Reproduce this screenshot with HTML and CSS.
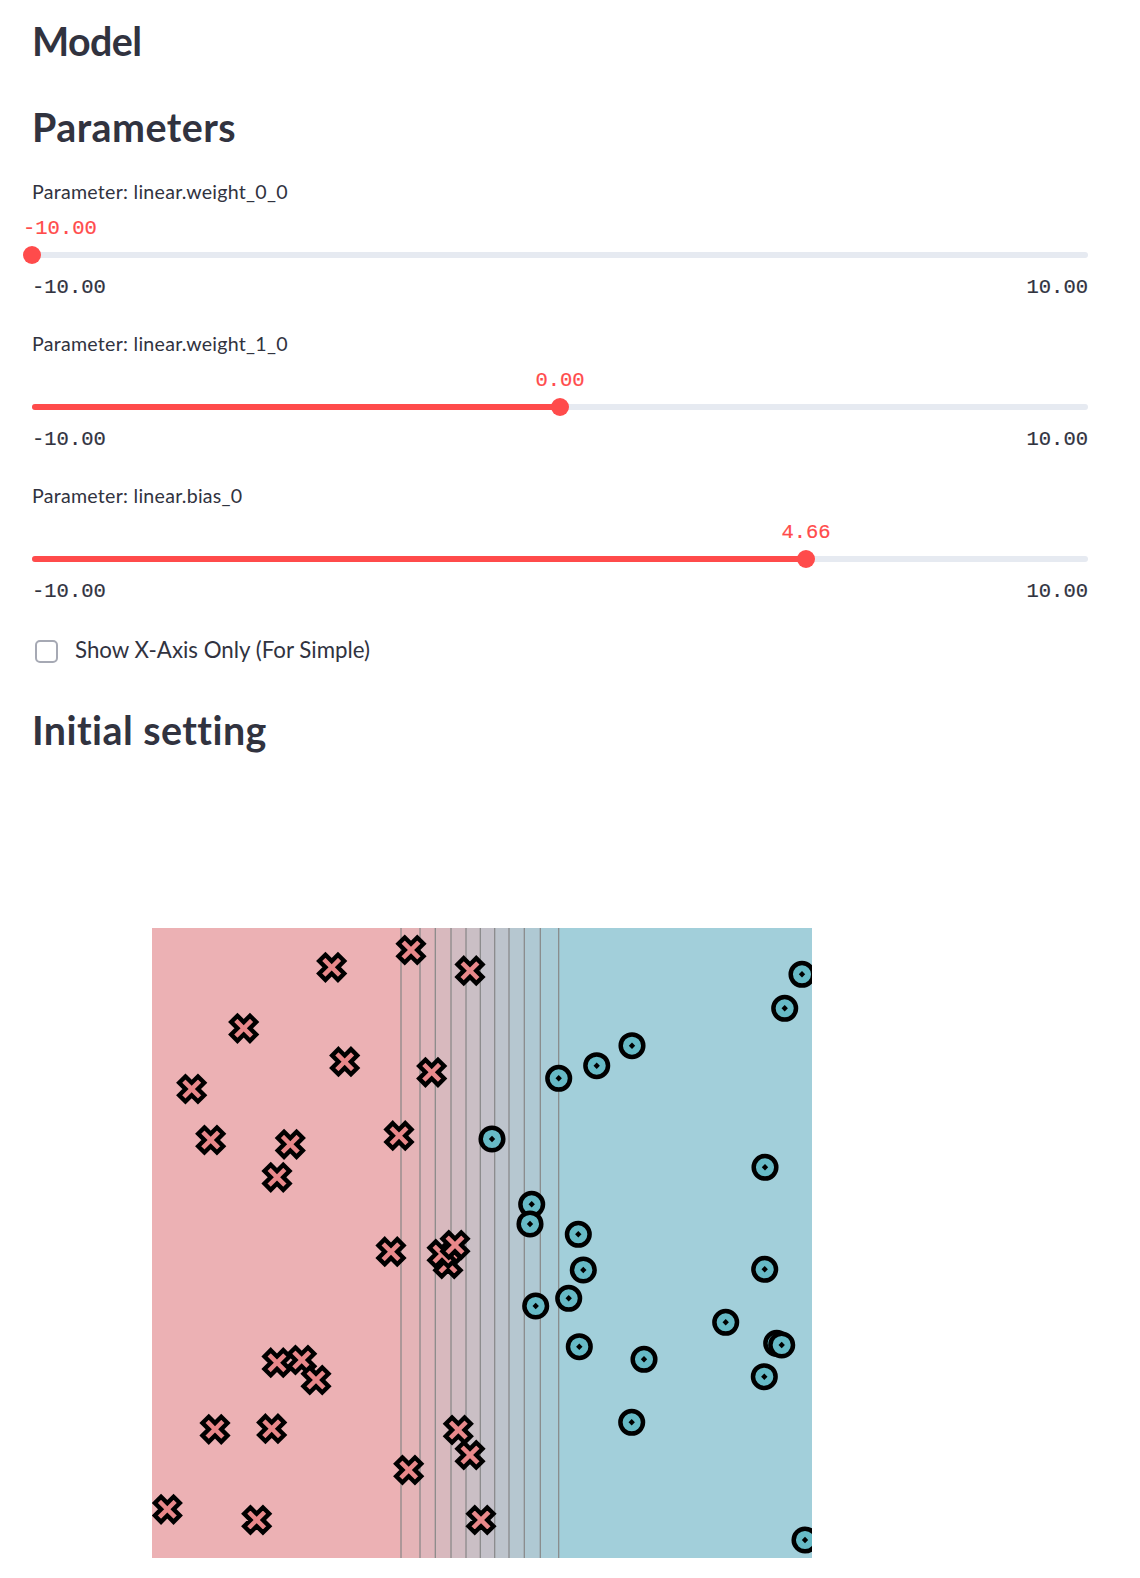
FILE: index.html
```html
<!DOCTYPE html>
<html lang="en">
<head>
<meta charset="utf-8">
<title>Model</title>
<link rel="stylesheet" href="styles.css">
</head>
<body>
<main class="page">
  <h3 class="heading h-model">Model</h3>
  <h3 class="heading h-params">Parameters</h3>

  <div class="slider">
    <div class="slider-label">Parameter: linear.weight_0_0</div>
    <div class="rail">
      <div class="value at-start" style="left:0%">-10.00</div>
      <div class="track"><div class="fill" style="width:0%"></div></div>
      <div class="thumb" style="left:0%"></div>
    </div>
    <div class="ticks"><span>-10.00</span><span>10.00</span></div>
  </div>

  <div class="slider">
    <div class="slider-label">Parameter: linear.weight_1_0</div>
    <div class="rail">
      <div class="value" style="left:50%">0.00</div>
      <div class="track"><div class="fill" style="width:50%"></div></div>
      <div class="thumb" style="left:50%"></div>
    </div>
    <div class="ticks"><span>-10.00</span><span>10.00</span></div>
  </div>

  <div class="slider">
    <div class="slider-label">Parameter: linear.bias_0</div>
    <div class="rail">
      <div class="value" style="left:73.3%">4.66</div>
      <div class="track"><div class="fill" style="width:73.3%"></div></div>
      <div class="thumb" style="left:73.3%"></div>
    </div>
    <div class="ticks"><span>-10.00</span><span>10.00</span></div>
  </div>

  <label class="check">
    <span class="box"></span>
    <span class="check-label">Show X-Axis Only (For Simple)</span>
  </label>

  <h3 class="heading h-initial">Initial setting</h3>

  <div class="figure">
    <svg class="plot" width="660" height="630" viewBox="0 0 660 630" xmlns="http://www.w3.org/2000/svg">
      <defs>
        <g id="mx">
          <polygon points="-6.25,-12.5 0,-6.25 6.25,-12.5 12.5,-6.25 6.25,0 12.5,6.25 6.25,12.5 0,6.25 -6.25,12.5 -12.5,6.25 -6.25,0 -12.5,-6.25" fill="#E8888A" stroke="#000" stroke-width="4.4" stroke-linejoin="miter"/>
        </g>
        <g id="mo">
          <circle r="11.3" fill="#67BAC6" stroke="#000" stroke-width="4.5"/>
          <polygon points="0,-3.2 3.2,0 0,3.2 -3.2,0" fill="#000"/>
        </g>
      </defs>
      <g class="bands">
        <rect x="0" y="0" width="249" height="630" fill="rgb(236,177,180)"/>
        <rect x="249" y="0" width="19" height="630" fill="rgb(229,180,183)"/>
        <rect x="268" y="0" width="15.3" height="630" fill="rgb(223,182,187)"/>
        <rect x="283.3" y="0" width="15.7" height="630" fill="rgb(216,185,190)"/>
        <rect x="299" y="0" width="15" height="630" fill="rgb(209,188,194)"/>
        <rect x="314" y="0" width="14.3" height="630" fill="rgb(202,191,197)"/>
        <rect x="328.3" y="0" width="14.4" height="630" fill="rgb(196,193,201)"/>
        <rect x="342.7" y="0" width="14.3" height="630" fill="rgb(189,196,204)"/>
        <rect x="357" y="0" width="15.3" height="630" fill="rgb(182,199,208)"/>
        <rect x="372.3" y="0" width="16" height="630" fill="rgb(175,201,211)"/>
        <rect x="388.3" y="0" width="18.4" height="630" fill="rgb(169,204,215)"/>
        <rect x="406.7" y="0" width="253.3" height="630" fill="rgb(162,207,218)"/>
      </g>
      <g class="contours" stroke="#858585" stroke-width="1.2">
        <line x1="249" y1="0" x2="249" y2="630"/>
        <line x1="268" y1="0" x2="268" y2="630"/>
        <line x1="283.3" y1="0" x2="283.3" y2="630"/>
        <line x1="299" y1="0" x2="299" y2="630"/>
        <line x1="314" y1="0" x2="314" y2="630"/>
        <line x1="328.3" y1="0" x2="328.3" y2="630"/>
        <line x1="342.7" y1="0" x2="342.7" y2="630"/>
        <line x1="357" y1="0" x2="357" y2="630"/>
        <line x1="372.3" y1="0" x2="372.3" y2="630"/>
        <line x1="388.3" y1="0" x2="388.3" y2="630"/>
        <line x1="406.7" y1="0" x2="406.7" y2="630"/>
      </g>
      <g class="class-x">
        <use href="#mx" x="179.7" y="39.3"/>
        <use href="#mx" x="259" y="22"/>
        <use href="#mx" x="318" y="42.7"/>
        <use href="#mx" x="91.7" y="100.3"/>
        <use href="#mx" x="192.7" y="133.7"/>
        <use href="#mx" x="39.7" y="161"/>
        <use href="#mx" x="279.7" y="144.3"/>
        <use href="#mx" x="58.7" y="212"/>
        <use href="#mx" x="138.3" y="216.3"/>
        <use href="#mx" x="247" y="207.7"/>
        <use href="#mx" x="125" y="249.3"/>
        <use href="#mx" x="239" y="323.7"/>
        <use href="#mx" x="296" y="336"/>
        <use href="#mx" x="290" y="326"/>
        <use href="#mx" x="303" y="317"/>
        <use href="#mx" x="125" y="434.7"/>
        <use href="#mx" x="149.7" y="432"/>
        <use href="#mx" x="164" y="452"/>
        <use href="#mx" x="63" y="501.3"/>
        <use href="#mx" x="119.7" y="500.7"/>
        <use href="#mx" x="306.3" y="502"/>
        <use href="#mx" x="318" y="527"/>
        <use href="#mx" x="256.7" y="542"/>
        <use href="#mx" x="15.3" y="581.3"/>
        <use href="#mx" x="104.7" y="592"/>
        <use href="#mx" x="329" y="592"/>
      </g>
      <g class="class-o">
        <use href="#mo" x="650" y="46.3"/>
        <use href="#mo" x="632.7" y="80.3"/>
        <use href="#mo" x="480" y="117.7"/>
        <use href="#mo" x="444.7" y="137.7"/>
        <use href="#mo" x="406.7" y="150.3"/>
        <use href="#mo" x="340" y="211"/>
        <use href="#mo" x="613" y="239.3"/>
        <use href="#mo" x="379.7" y="276.3"/>
        <use href="#mo" x="378" y="296"/>
        <use href="#mo" x="426.3" y="306.3"/>
        <use href="#mo" x="431.3" y="342"/>
        <use href="#mo" x="612.7" y="341.3"/>
        <use href="#mo" x="416.7" y="370.3"/>
        <use href="#mo" x="383.7" y="378"/>
        <use href="#mo" x="573.7" y="394.3"/>
        <use href="#mo" x="427.3" y="418.7"/>
        <use href="#mo" x="624.7" y="415.3"/>
        <use href="#mo" x="629.7" y="417"/>
        <use href="#mo" x="492" y="431.3"/>
        <use href="#mo" x="612.3" y="448.7"/>
        <use href="#mo" x="479.7" y="494.3"/>
        <use href="#mo" x="653" y="612"/>
      </g>
    </svg>
  </div>
</main>
</body>
</html>
```

FILE: styles.css
```css
* {
  box-sizing: border-box;
}

html,
body {
  margin: 0;
  background: #ffffff;
}

body {
  font-family: Lato, "Noto Sans", "DejaVu Sans", sans-serif;
  color: #31333f;
}

.page {
  width: 1056px;
  margin-left: 32px;
  padding-top: 16px;
  padding-bottom: 20px;
}

.heading {
  margin: 0;
  font-size: 39.4px;
  line-height: 50px;
  font-weight: 700;
  letter-spacing: 0.45px;
  color: #31333f;
}

.h-model {
  letter-spacing: -0.6px;
}

.h-params {
  margin-top: 36px;
}

.h-initial {
  margin-top: 36.6px;
}

.slider {
  margin-bottom: 30px;
}

.h-params + .slider {
  margin-top: 26.4px;
}

.slider-label {
  font-size: 19.6px;
  line-height: 28px;
  height: 28px;
  letter-spacing: 0.26px;
  color: #31333f;
}

.rail {
  position: relative;
  height: 60px;
}

.track {
  position: absolute;
  left: 0;
  right: 0;
  top: 46px;
  height: 6px;
  border-radius: 3px;
  background: #e6eaf1;
  overflow: hidden;
}

.fill {
  height: 100%;
  background: #ff4b4b;
}

.thumb {
  position: absolute;
  top: 40px;
  width: 18px;
  height: 18px;
  margin-left: -9px;
  border-radius: 50%;
  background: #ff4b4b;
}

.value,
.ticks {
  font-family: "Liberation Mono", "DejaVu Sans Mono", monospace;
  font-size: 20.5px;
  line-height: 24px;
  -webkit-text-stroke: 0.2px currentColor;
}

.value {
  position: absolute;
  top: 11px;
  color: #ff4b4b;
  white-space: nowrap;
  transform: translateX(-50%);
}

.value.at-start {
  transform: none;
  margin-left: -9px;
}

.ticks {
  display: flex;
  justify-content: space-between;
  margin-top: 10px;
  height: 24px;
  color: #31333f;
}

.check {
  display: flex;
  align-items: flex-start;
  height: 34px;
}

.box {
  flex: none;
  width: 23px;
  height: 23px;
  margin-left: 3px;
  margin-top: 6px;
  border: 2px solid #a6a9b4;
  border-radius: 5px;
  background: #ffffff;
}

.check-label {
  margin-left: 17px;
  margin-top: 2px;
  font-size: 22.3px;
  line-height: 28px;
  color: #31333f;
}

.figure {
  margin-top: 172.9px;
  margin-left: 120px;
  width: 660px;
  height: 630px;
}

.plot {
  display: block;
  overflow: hidden;
}
```
